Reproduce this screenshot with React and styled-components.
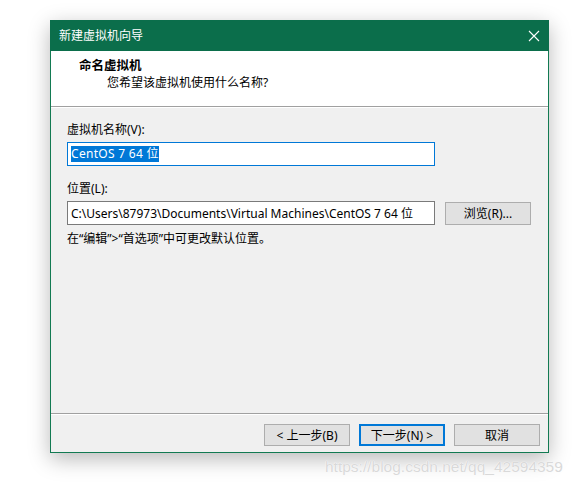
import React from "react";
import styled, { createGlobalStyle } from "styled-components";

const GlobalStyle = createGlobalStyle`
  html, body {
    margin: 0;
    padding: 0;
    background: #ffffff;
  }
  body {
    font-family: "Noto Sans", "Noto Sans CJK SC", sans-serif;
    font-size: 12px;
    color: #000000;
  }
`;

const Page = styled.div`
  position: relative;
  width: 578px;
  height: 485px;
  padding: 20px 0 0 50px;
  box-sizing: border-box;
  overflow: hidden;
`;

const Dialog = styled.div`
  width: 499px;
  height: 433px;
  box-sizing: border-box;
  border: 1px solid #127a52;
  border-top: none;
  background: #f0f0f0;
  display: flex;
  flex-direction: column;
  box-shadow: 0 6px 20px rgba(0, 0, 0, 0.28);
`;

const TitleBar = styled.div`
  height: 31px;
  margin: 0 -1px;
  background: #0b6e4b;
  color: #ffffff;
  display: flex;
  align-items: center;
  justify-content: space-between;
  padding: 0 9px 0 9px;
  flex-shrink: 0;
`;

const TitleText = styled.span`
  font-size: 12px;
  line-height: 16px;
`;

const CloseButton = styled.span`
  display: flex;
  width: 12px;
  height: 12px;
`;

const Header = styled.div`
  height: 56px;
  background: #ffffff;
  padding: 6px 0 0 28px;
  box-sizing: border-box;
  border-bottom: 1px solid #a0a0a0;
  flex-shrink: 0;
`;

const HeaderTitle = styled.div`
  font-weight: 700;
  font-size: 12.5px;
  line-height: 18px;
`;

const HeaderSub = styled.div`
  padding-left: 28px;
  line-height: 16px;
`;

const Rule = styled.div`
  height: 1px;
  background: #ffffff;
  flex-shrink: 0;
`;

const Body = styled.div`
  flex: 1;
  padding: 14px 16px 0 16px;
  display: flex;
  flex-direction: column;
`;

const Label = styled.div`
  line-height: 16px;
  margin-top: ${(p) => p.$gap || 0}px;
`;

const Row = styled.div`
  display: flex;
  align-items: center;
  gap: 10px;
  margin-top: 4px;
`;

const TextBox = styled.div`
  width: 368px;
  height: 24px;
  box-sizing: border-box;
  border: 1px solid ${(p) => (p.$focused ? "#0078d7" : "#7a7a7a")};
  background: #ffffff;
  padding: 0 3px;
  display: flex;
  align-items: center;
  white-space: nowrap;
  overflow: hidden;
`;

const Selection = styled.span`
  background: #0078d7;
  color: #ffffff;
  line-height: 16px;
  letter-spacing: 0.3px;
`;

const Hint = styled.div`
  line-height: 16px;
  margin-top: 6px;
`;

const Button = styled.button`
  width: 86px;
  height: ${(p) => p.$h || 22}px;
  box-sizing: border-box;
  border: ${(p) => (p.$default ? "2px solid #0078d7" : "1px solid #adadad")};
  background: #e1e1e1;
  font-family: inherit;
  font-size: 12px;
  color: #000000;
  padding: 0;
  display: flex;
  align-items: center;
  justify-content: center;
  gap: 3px;
`;

const Footer = styled.div`
  border-top: 1px solid #a0a0a0;
  box-shadow: inset 0 1px 0 #ffffff;
  height: 39px;
  box-sizing: border-box;
  padding: 10px 8px 0 0;
  display: flex;
  justify-content: flex-end;
  gap: 9px;
  flex-shrink: 0;
`;

const Watermark = styled.div`
  position: absolute;
  left: 325px;
  top: 458px;
  font-family: "Liberation Sans", Arial, sans-serif;
  font-size: 15.5px;
  line-height: 18px;
  color: #d9d9d9;
  text-shadow: 0 0 1px #ffffff, 0 0 1px #ffffff;
  white-space: nowrap;
`;

const CloseIcon = () => (
  <svg width="12" height="12" viewBox="0 0 12 12">
    <path d="M1 1 L11 11 M11 1 L1 11" stroke="#ffffff" strokeWidth="1.1" />
  </svg>
);

export default function App() {
  return (
    <>
      <GlobalStyle />
      <Page>
        <Dialog>
          <TitleBar>
            <TitleText>新建虚拟机向导</TitleText>
            <CloseButton>
              <CloseIcon />
            </CloseButton>
          </TitleBar>
          <Header>
            <HeaderTitle>命名虚拟机</HeaderTitle>
            <HeaderSub>您希望该虚拟机使用什么名称?</HeaderSub>
          </Header>
          <Rule />
          <Body>
            <Label>虚拟机名称(V):</Label>
            <Row>
              <TextBox $focused>
                <Selection>CentOS 7 64 位</Selection>
              </TextBox>
            </Row>
            <Label $gap={15}>位置(L):</Label>
            <Row>
              <TextBox>C:\Users\87973\Documents\Virtual Machines\CentOS 7 64 位</TextBox>
              <Button $h={23}>浏览(R)...</Button>
            </Row>
            <Hint>在“编辑”&gt;“首选项”中可更改默认位置。</Hint>
          </Body>
          <Footer>
            <Button>&lt; 上一步(B)</Button>
            <Button $default>下一步(N) &gt;</Button>
            <Button>取消</Button>
          </Footer>
        </Dialog>
        <Watermark>https://blog.csdn.net/qq_42594359</Watermark>
      </Page>
    </>
  );
}
